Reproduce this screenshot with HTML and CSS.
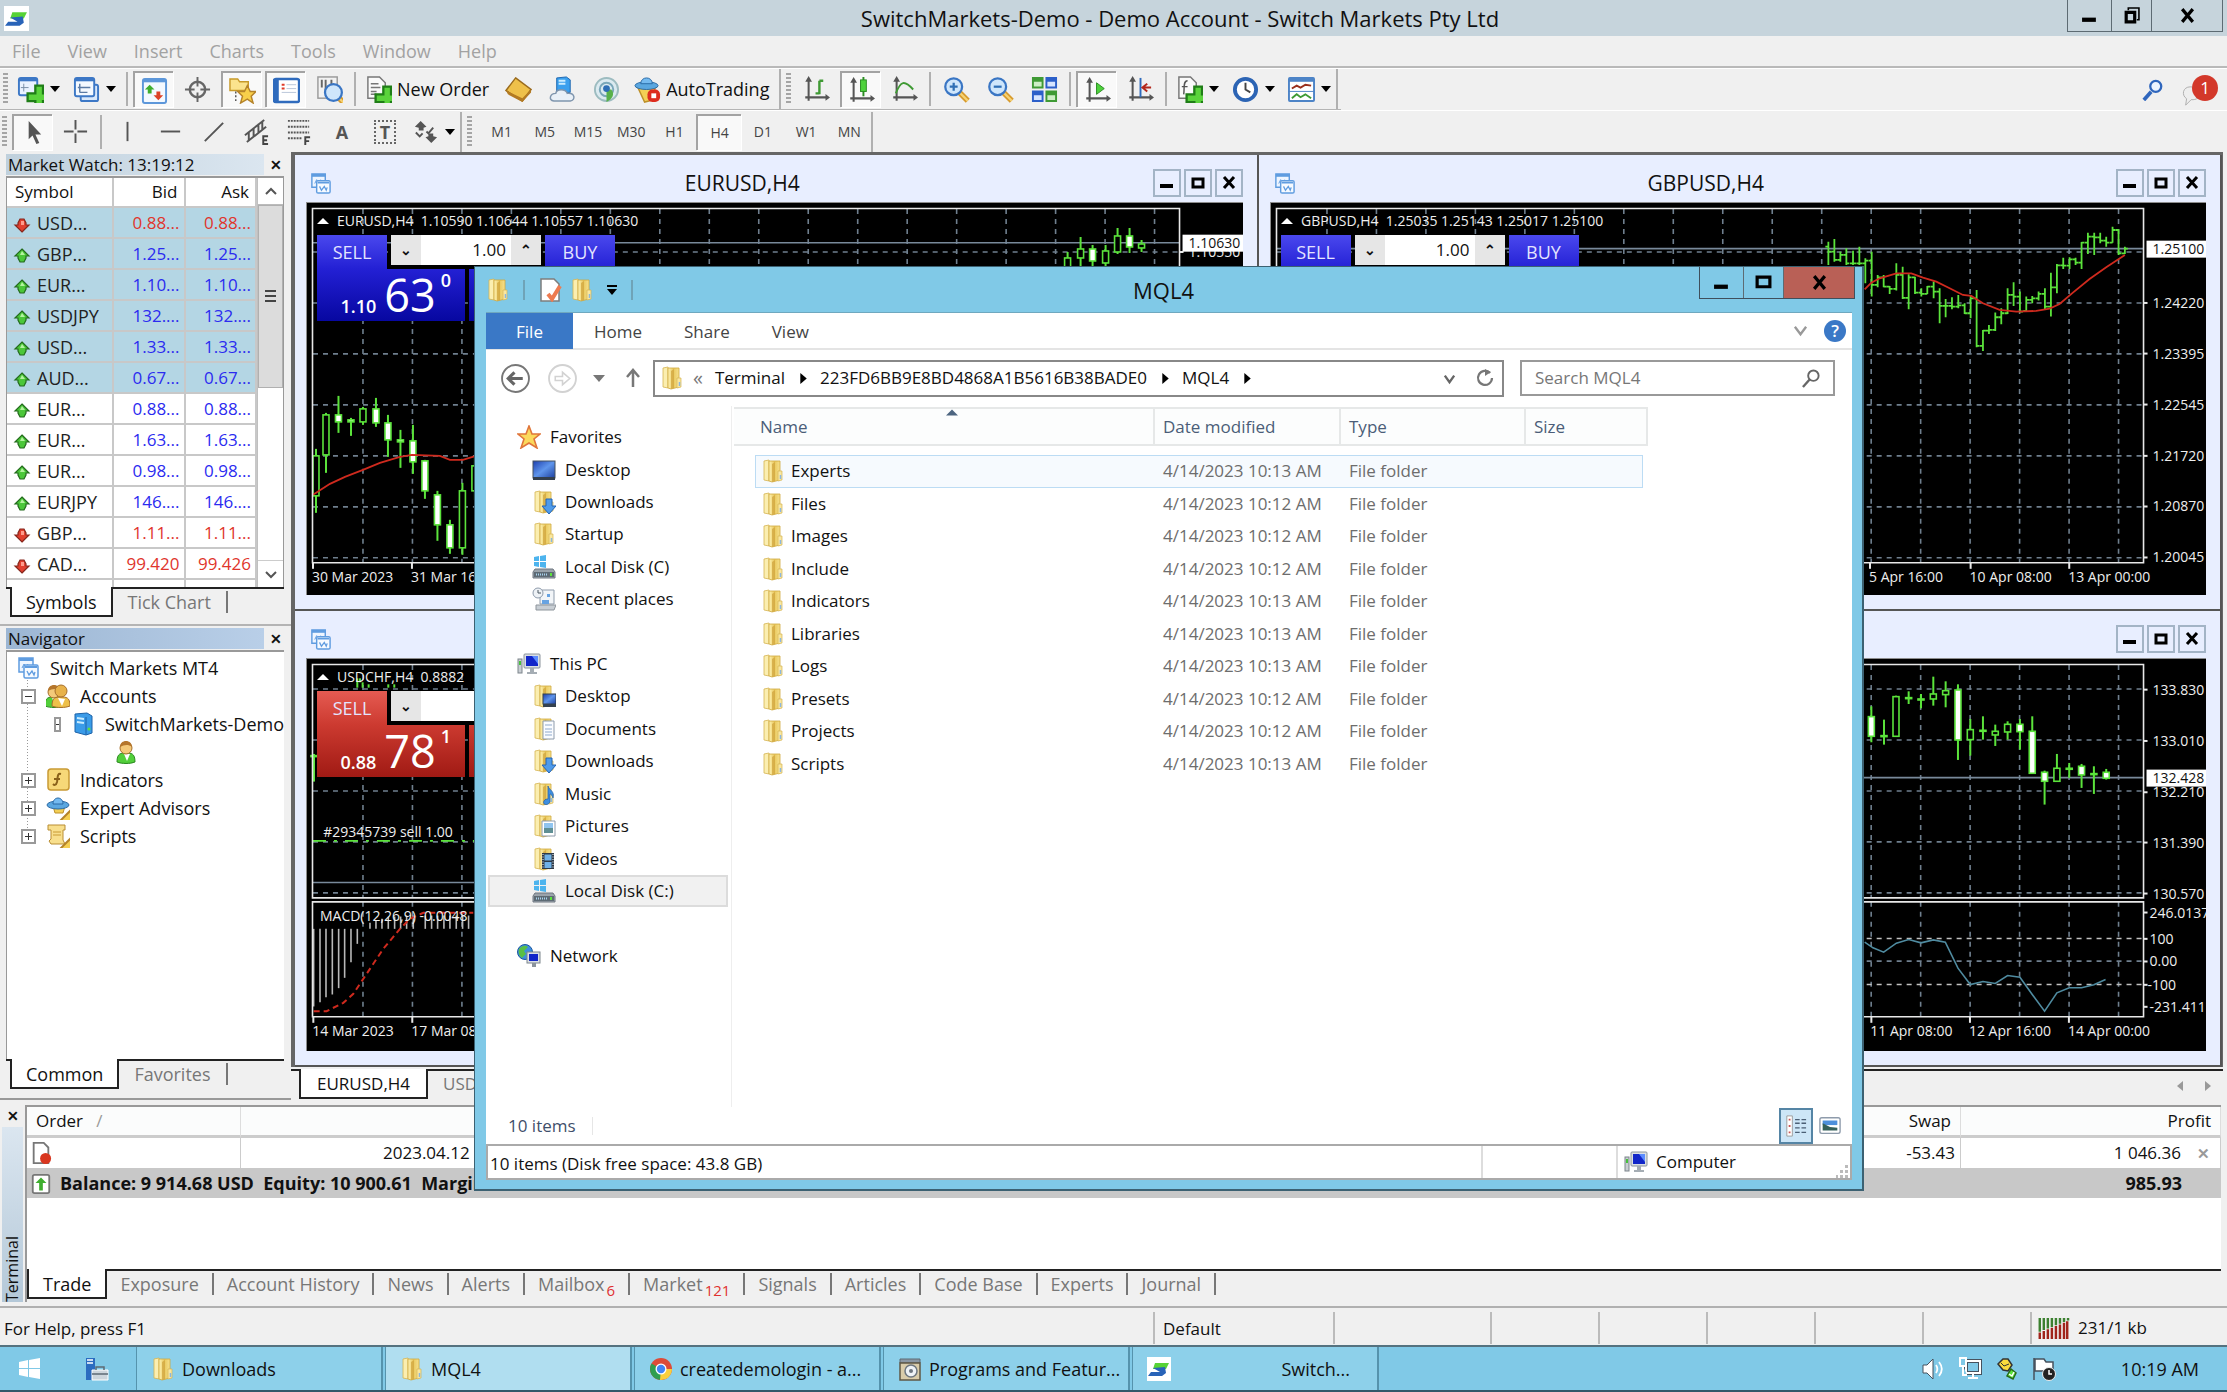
FILE: index.html
```html
<!DOCTYPE html>
<html lang="en">
<head>
<meta charset="utf-8">
<title>SwitchMarkets-Demo</title>
<link rel="stylesheet" href="styles.css">
</head>
<body>
<svg class="defs" aria-hidden="true">
  <defs>
    <linearGradient id="gold" x1="0" x2="1"><stop offset="0" stop-color="#fff3b4"/><stop offset=".5" stop-color="#e9c95f"/><stop offset="1" stop-color="#f6e08c"/></linearGradient>
    <linearGradient id="blue" x1="0" y1="0" x2="1" y2="1"><stop offset="0" stop-color="#1d3fae"/><stop offset=".5" stop-color="#5f95ec"/><stop offset="1" stop-color="#1c3f9e"/></linearGradient>
    <symbol id="folder" viewBox="0 0 24 24"><path d="M3 2l5-1v21l-5-1z" fill="#fbeeb0" stroke="#d6b452" stroke-width=".8"/><path d="M8 2h11v19l-8 2-3-1z" fill="url(#gold)" stroke="#cfa83e" stroke-width=".8"/><path d="M11 5l3-2v19l-3 1z" fill="#cfa23a" opacity=".7"/><path d="M17 12h4v9l-4 1z" fill="#f9e7a0" stroke="#d6b452" stroke-width=".7"/><path d="M19.500 16v4" stroke="#8db7dd" stroke-width="1.500"/></symbol>
    <symbol id="drive" viewBox="0 0 24 24"><path d="M2 2l5-1v5H2zM8 1l6-1v6H8zM2 7h5v5l-5-1zM8 7h6v6l-6-1z" fill="#4db4ee"/><path d="M3 14h18l2 3v6H1v-6z" fill="#9aa3ab" stroke="#6e7780"/><rect x="2" y="17" width="20" height="5" fill="#5d6a74"/><path d="M4 19.500h12" stroke="#a9d3ee" stroke-width="2" stroke-dasharray="1 1"/><rect x="18" y="18" width="2" height="3" fill="#5be33b"/></symbol>
    <symbol id="pc" viewBox="0 0 24 24"><rect x="1" y="7" width="4" height="14" fill="#c9ced3" stroke="#7d858c"/><path d="M3 9v4" stroke="#46c23b" stroke-width="2"/><rect x="7" y="2" width="16" height="14" rx="1" fill="#dadfe4" stroke="#8b949c"/><rect x="9" y="4" width="12" height="10" fill="#1226c9"/><path d="M15 4h6v8z" fill="#5b8cff"/><path d="M13 16h4v4h3v2h-10v-2h3z" fill="#a5adb4"/></symbol>
    <symbol id="network" viewBox="0 0 24 24"><circle cx="8" cy="8" r="7.500" fill="#3d8ee0" stroke="#1c579f"/><path d="M2 5c3-4 7-4 9-2l-4 4 2 3-4 4c-3-2-4-5-3-9z" fill="#59bf46"/><rect x="10" y="8" width="13" height="11" fill="#dadfe4" stroke="#7d858c"/><rect x="12" y="10" width="9" height="7" fill="#1226c9"/><path d="M15 19h4v4h-4z" fill="#8b949c"/></symbol>
    <symbol id="star" viewBox="0 0 24 24"><path d="M12 1l3 8h8l-6 5 3 9-8-5-8 5 3-9-6-5h8z" fill="#fbd95c" stroke="#e0763a" stroke-width="1.600"/></symbol>
    <symbol id="screen" viewBox="0 0 24 24"><rect x="1" y="3" width="22" height="17" fill="url(#blue)" stroke="#47525e"/><path d="M1 19h22v3H1z" fill="#333f4d"/></symbol>
    <symbol id="f-desk" viewBox="0 0 24 24"><use href="#folder"/><rect x="11" y="10" width="13" height="10" fill="url(#blue)" stroke="#35424f"/><path d="M11 20h13v3H11z" fill="#35424f"/></symbol>
    <symbol id="f-doc" viewBox="0 0 24 24"><use href="#folder"/><path d="M11 4h11v18H11z" fill="#fafcff" stroke="#8e9bab"/><path d="M13 8h7M13 12h7M13 15h7M13 18h7" stroke="#8fa9cc"/></symbol>
    <symbol id="f-down" viewBox="0 0 24 24"><use href="#folder"/><path d="M14 9h6v7h4l-7 8-7-8h4z" fill="#4f9bea" stroke="#2465b5"/></symbol>
    <symbol id="f-music" viewBox="0 0 24 24"><use href="#folder"/><path d="M16 4c1 4 7 5 5 12-1-3-2-4-3-4v8c-2 4-8 3-6-1 1-2 3-2 4-2z" fill="#3d8ee0" stroke="#1f5da8" stroke-width=".7"/></symbol>
    <symbol id="f-pic" viewBox="0 0 24 24"><use href="#folder"/><path d="M10 7h13v15H10z" fill="#fff" stroke="#8e9bab"/><path d="M12 9h9v5h-9z" fill="#8fc4ef"/><path d="M12 14h9v5h-9z" fill="#5f8f94"/></symbol>
    <symbol id="f-vid" viewBox="0 0 24 24"><use href="#folder"/><path d="M10 6h12v16H10z" fill="#2e3a48"/><path d="M12.500 7.500h7v6h-7zM12.500 15h7v6h-7z" fill="#6fb1e8"/><path d="M11 7v14M21 7v14" stroke="#fff" stroke-dasharray="1 1.500"/></symbol>
    <symbol id="recent" viewBox="0 0 24 24"><path d="M8 3h14v14H8z" fill="#f2f5f8" stroke="#8e9bab"/><path d="M4 18h20l-2 5H4z" fill="#c8ced4" stroke="#8e959c"/><circle cx="6" cy="6" r="5" fill="#eef2f6" stroke="#8e9bab"/><path d="M6 3v3h3" stroke="#4b5661" fill="none"/><path d="M10 13h7v4h-7zM15 7h3v3h-3z" fill="#67a3e2"/></symbol>
    <symbol id="mt" viewBox="0 0 24 24"><path d="M3 2h14v14H3z" fill="#eef5ff" stroke="#5f9ce0" stroke-width="1.500"/><path d="M3 3.500h14" stroke="#5f9ce0" stroke-width="3"/><path d="M6 12l2-4 2 3 2-3" stroke="#5f9ce0" fill="none"/><rect x="8" y="9" width="14" height="13" rx="1.500" fill="#f6faff" stroke="#5f9ce0" stroke-width="1.500"/><path d="M9 11h12" stroke="#5f9ce0" stroke-width="2"/><path d="M11 15l2 4 3-4 2 4 1-3" stroke="#5f9ce0" fill="none" stroke-width="1.300"/></symbol>
    <symbol id="up" viewBox="0 0 18 18"><path d="M9 2l7 7h-3v2l-2 4H7l-2-4V9H2z" fill="#4bc739" stroke="#236b1c" stroke-width="1.200"/><path d="M9 4l3 4H7z" fill="#b4f29f"/></symbol>
    <symbol id="down" viewBox="0 0 18 18"><path d="M9 16l7-7h-3V7l-2-4H7L5 7v2H2z" fill="#e2402f" stroke="#86271c" stroke-width="1.200"/><path d="M8 5h3v4H8z" fill="#ff9c8c"/></symbol>
    <symbol id="plus" viewBox="0 0 14 14"><path d="M5 1h4v4h4v4H9v4H5V9H1V5h4z" fill="#5ad33c" stroke="#1f7d17" stroke-width="1.200"/></symbol>
    <symbol id="lens" viewBox="0 0 24 24"><path d="M14 14l8 8" stroke="#d79a2b" stroke-width="5"/><path d="M14 14l8 8" stroke="#f6d273" stroke-width="2"/><circle cx="9.500" cy="9.500" r="7.500" fill="#cfe6fb" stroke="#3a76c4" stroke-width="2"/></symbol>
    <symbol id="switch" viewBox="0 0 24 24"><rect width="24" height="24" fill="#fff"/><path d="M8 6h14l-3 6H6z" fill="#57d336"/><path d="M6 11l12-1 1 6-4 3H1l3-4h9z" fill="#2863b8"/></symbol>
    <symbol id="win" viewBox="0 0 24 24"><path d="M2 5l9-2v8H2zM12 3l11-2v10H12zM2 12h9v8l-9-2zM12 12h11v10l-11-2z" fill="#fff"/></symbol>
    <symbol id="hat" viewBox="0 0 24 24"><path d="M7 10h12l-2 7H9z" fill="#f3cf55" stroke="#bd902a"/><ellipse cx="12" cy="9" rx="11" ry="4" fill="#5aa7e0" stroke="#2a6aa5"/><path d="M7 8c0-8 10-8 10 0z" fill="#74baf0" stroke="#2a6aa5"/></symbol>
    <symbol id="tag" viewBox="0 0 12 12"><path d="M6 1l5 5-5 5-5-5z" fill="#f5cf52" stroke="#b5832a"/></symbol>
    <symbol id="axes" viewBox="0 0 24 24"><path d="M5 22V3M2 19h20" stroke="#555" stroke-width="1.800" fill="none"/><path d="M5 0l3 5H2zM24 19l-4 3v-6z" fill="#555"/></symbol>
    <symbol id="person" viewBox="0 0 24 24"><path d="M3 22c0-9 4-9 9-9s9 0 9 9c-5 2-13 2-18 0z" fill="#52cf3a" stroke="#2c8a21"/><path d="M10 14l3 7 3-7z" fill="#fff"/><circle cx="12" cy="8" r="6" fill="#f4c979" stroke="#a66f2b"/><path d="M6 7c0-8 12-8 12 0-4-3-8-2-12 0z" fill="#b5762c"/></symbol>
  </defs>
</svg>

<header class="titlebar">
  <svg class="i25"><use href="#switch"/></svg>
  <h1>SwitchMarkets-Demo - Demo Account - Switch Markets Pty Ltd</h1>
  <div class="winbtns main-btns">
    <button aria-label="Minimize"><svg viewBox="0 0 16 16"><path d="M1 10h13v4H1z"/></svg></button>
    <button aria-label="Restore"><svg viewBox="0 0 16 16"><path d="M5 3V1h10v11h-2" fill="none" stroke="#000" stroke-width="1.500"/><path d="M3 5h8v9H3z" fill="none" stroke="#000" stroke-width="3"/></svg></button>
    <button class="wide" aria-label="Close"><svg viewBox="0 0 16 16"><path d="M3 2l10 12M13 2L3 14" stroke="#000" stroke-width="3"/></svg></button>
  </div>
</header>
<nav class="menu">
  <button>File</button><button>View</button><button>Insert</button><button>Charts</button><button>Tools</button><button>Window</button><button>Help</button>
</nav>

<div class="toolrow">
  <div class="toolbar">
    <i class="grip"></i>
    <button class="tb drop" aria-label="New chart"><svg viewBox="0 0 28 28"><rect x="2" y="2" width="19" height="18" rx="2" fill="#eaf3ff" stroke="#3d78c6" stroke-width="2"/><path d="M2 4h19" stroke="#3d78c6" stroke-width="3"/><path d="M7 8v8M4 12h8" stroke="#7a8fa8"/><svg x="9" y="8" width="20" height="20"><use href="#plus"/></svg></svg></button>
    <button class="tb drop" aria-label="Profiles"><svg viewBox="0 0 28 28"><rect x="8" y="9" width="18" height="17" rx="2" fill="#d8e8fb" stroke="#3d78c6" stroke-width="2"/><rect x="2" y="2" width="20" height="19" rx="2" fill="#f4f9ff" stroke="#3d78c6" stroke-width="2"/><path d="M2 4h20" stroke="#3d78c6" stroke-width="3"/><path d="M7 8v9M5 12h13M7 17h8" stroke="#5b7ba5" stroke-width="1.500"/></svg></button>
    <i class="sep"></i>
    <button class="tb on" aria-label="Market Watch"><svg viewBox="0 0 28 28"><rect x="2" y="2" width="24" height="25" rx="2" fill="#f4f9ff" stroke="#5d97da" stroke-width="2"/><path d="M2 4h24" stroke="#5d97da" stroke-width="3"/><path d="M9 8l5 5h-3v4H7v-4H4z" fill="#3fae2f"/><path d="M18 24l-5-5h3v-4h4v4h3z" fill="#dd4227"/></svg></button>
    <button class="tb" aria-label="Data Window"><svg viewBox="0 0 28 28"><circle cx="14" cy="14" r="8" fill="none" stroke="#666" stroke-width="2.500"/><path d="M14 1v10M14 17v10M1 14h10M17 14h10" stroke="#666" stroke-width="2"/></svg></button>
    <button class="tb on" aria-label="Navigator"><svg viewBox="0 0 28 28"><path d="M1 2h8l2 3h9v9H1z" fill="#fbe38d" stroke="#c79a2a" stroke-width="1.500"/><path d="M7 15v11" stroke="#555" stroke-dasharray="2 2" stroke-width="1.500"/><path d="M19 9l3 6h6l-5 5 2 7-6-4-7 4 2-7-5-5h7z" fill="#f8cf4a" stroke="#b5832a" stroke-width="1.500"/></svg></button>
    <button class="tb on" aria-label="Terminal"><svg viewBox="0 0 28 28"><rect x="1" y="2" width="26" height="24" rx="2" fill="#fff" stroke="#2f6bbd" stroke-width="2.500"/><path d="M2 3h4v22H2z" fill="#2f6bbd"/><path d="M9 8h3M9 12h3" stroke="#e03c2a" stroke-width="2"/><path d="M14 8h10M14 12h10M9 16h15" stroke="#b9c6d8"/></svg></button>
    <button class="tb" aria-label="Strategy Tester"><svg viewBox="0 0 28 28"><rect x="2" y="1" width="20" height="22" fill="#f2f2f2" stroke="#9a9a9a" stroke-width="1.500"/><path d="M6 4v8M10 4v12M16 4v6" stroke="#666" stroke-width="2"/><svg x="7" y="6" width="22" height="22"><use href="#lens"/></svg></svg></button>
    <i class="sep"></i>
    <button class="tb text"><svg viewBox="0 0 28 28"><path d="M3 1h12l6 6v16H3z" fill="#fafafa" stroke="#777" stroke-width="1.500"/><path d="M6 8h8M6 12h10M6 16h6M6 19h6" stroke="#777" stroke-width="1.500"/><svg x="9" y="9" width="19" height="19"><use href="#plus"/></svg></svg>New Order</button>
    <button class="tb" aria-label="MetaEditor"><svg viewBox="0 0 28 28"><path d="M11 2l16 12-9 12L1 15z" fill="#eec04a" stroke="#9a6a1c" stroke-width="1.500"/><path d="M1 15l2 4 15 8 9-10v-3l-9 9z" fill="#b37a22"/></svg></button>
    <button class="tb" aria-label="Virtual hosting"><svg viewBox="0 0 28 28"><path d="M8 2l10-1 4 3v13H8z" fill="#3aa0ee" stroke="#1c66b0"/><path d="M10 5h7M10 8h7" stroke="#c9ecff" stroke-width="2"/><path d="M5 26c-6-1-4-8 2-8 1-5 10-5 12 0 8-1 9 7 3 8z" fill="#e9f0f7" stroke="#7f95ad" stroke-width="1.500"/></svg></button>
    <button class="tb" aria-label="Signals"><svg viewBox="0 0 28 28"><circle cx="14" cy="14" r="12" fill="#dbeaf0" stroke="#9dbcc0" stroke-width="2"/><circle cx="14" cy="14" r="7" fill="none" stroke="#7aa7b9" stroke-width="2"/><path d="M14 14h5c4 5 1 10-5 13z" fill="#58b14b"/><circle cx="14" cy="13" r="3.500" fill="#2f6fb5"/></svg></button>
    <button class="tb text auto"><svg viewBox="0 0 28 28"><path d="M4 12h18l-3 13-8 2z" fill="#f3cf55" stroke="#bd902a" stroke-width="1.500"/><ellipse cx="13" cy="10" rx="12" ry="4" fill="#5aa7e0" stroke="#2a6aa5"/><path d="M7 8c0-8 12-8 12 0z" fill="#74baf0" stroke="#2a6aa5"/><rect x="14" y="14" width="13" height="13" rx="5" fill="#dd2c1e"/><rect x="18" y="18" width="5" height="5" fill="#fff"/></svg>AutoTrading</button>
    <i class="edge"></i>
    <i class="grip"></i>
    <button class="tb" aria-label="Bar chart"><svg viewBox="0 0 28 28"><svg width="26" height="28"><use href="#axes"/></svg><path d="M17 5v14M17 5h4M13 18h4" stroke="#3f9a34" stroke-width="2.500"/></svg></button>
    <button class="tb on" aria-label="Candlesticks"><svg viewBox="0 0 28 28"><svg width="26" height="28"><use href="#axes"/></svg><path d="M16 0v20" stroke="#2b8d22" stroke-width="2"/><rect x="13" y="3" width="6" height="12" fill="#4ed23c" stroke="#2b8d22"/></svg></button>
    <button class="tb" aria-label="Line chart"><svg viewBox="0 0 28 28"><svg width="26" height="28"><use href="#axes"/></svg><path d="M5 18c5-13 9-14 18-4" stroke="#3f9a34" stroke-width="2" fill="none"/></svg></button>
    <i class="sep"></i>
    <button class="tb" aria-label="Zoom in"><svg viewBox="0 0 24 24"><use href="#lens"/><path d="M6 9.500h7M9.500 6v7" stroke="#2f6fb5" stroke-width="2"/></svg></button>
    <button class="tb" aria-label="Zoom out"><svg viewBox="0 0 24 24"><use href="#lens"/><path d="M6 9.500h7" stroke="#2f6fb5" stroke-width="2"/></svg></button>
    <button class="tb" aria-label="Tile windows"><svg viewBox="0 0 28 28"><path d="M1 1h12v12H1zM15 15h12v12H15z" fill="#3f9a34"/><path d="M15 1h12v12H15zM1 15h12v12H1z" fill="#2c5fc9"/><path d="M3 6h8v5H3zM17 20h8v5h-8z" fill="#cdeec5"/><path d="M17 6h8v5h-8zM3 20h8v5H3z" fill="#d6e4ff"/></svg></button>
    <i class="sep"></i>
    <button class="tb on" aria-label="Auto scroll"><svg viewBox="0 0 28 28"><svg width="26" height="28"><use href="#axes"/></svg><path d="M13 6l8 6-8 6z" fill="#4ed23c" stroke="#2b8d22"/></svg></button>
    <button class="tb" aria-label="Chart shift"><svg viewBox="0 0 28 28"><svg width="26" height="28"><use href="#axes"/></svg><path d="M14 2v20" stroke="#2f6bbd" stroke-width="2"/><path d="M16 12h9M21 8l-5 4 5 4" stroke="#b3271b" stroke-width="2" fill="none"/></svg></button>
    <i class="sep"></i>
    <button class="tb drop" aria-label="Indicators"><svg viewBox="0 0 28 28"><path d="M3 1h12l6 6v16H3z" fill="#fafafa" stroke="#777" stroke-width="1.500"/><path d="M12 5c-5 0-3 8-4 14M6 11h6" stroke="#555" stroke-width="1.500" fill="none"/><svg x="9" y="9" width="19" height="19"><use href="#plus"/></svg></svg></button>
    <button class="tb drop" aria-label="Periods"><svg viewBox="0 0 28 28"><circle cx="14" cy="14" r="11" fill="#fff" stroke="#2c64b4" stroke-width="4"/><path d="M14 7v7l5 3" stroke="#444" stroke-width="2" fill="none"/></svg></button>
    <button class="tb drop" aria-label="Templates"><svg viewBox="0 0 28 28"><rect x="1" y="2" width="26" height="24" rx="1" fill="#fff" stroke="#4d84c7" stroke-width="2"/><path d="M1 4h26" stroke="#4d84c7" stroke-width="4"/><path d="M4 13l5-3 4 2 5-3 6 1" stroke="#99301d" stroke-width="2" fill="none"/><path d="M1 16h26" stroke="#4d84c7"/><path d="M4 23l5-4 4 3 5-3 6 4" stroke="#3f9a34" stroke-width="2" fill="none"/></svg></button>
    <i class="edge"></i>
  </div>
  <div class="tool-right">
    <button aria-label="Search"><svg viewBox="0 0 24 24"><path d="M10 14l-8 9" stroke="#2f66bd" stroke-width="4"/><circle cx="15" cy="8" r="6" fill="#eef5ff" stroke="#2f66bd" stroke-width="2.500"/></svg></button>
    <button class="notify" aria-label="Notifications"><svg viewBox="0 0 24 24"><path d="M9 2c14 0 14 15 1 14l-6 6 1-7C-1 11 1 2 9 2z" fill="#eee" stroke="#aaa"/></svg><b>1</b></button>
  </div>
</div>

<div class="toolrow second">
  <div class="toolbar">
    <i class="grip"></i>
    <button class="tb on" aria-label="Cursor"><svg viewBox="0 0 28 28"><path d="M9 2v19l4-4 4 9 3-1-4-9h6z" fill="#555"/></svg></button>
    <button class="tb" aria-label="Crosshair"><svg viewBox="0 0 28 28"><path d="M14 2v10M14 16v10M2 14h10M16 14h10" stroke="#555" stroke-width="2"/></svg></button>
    <i class="sep"></i>
    <button class="tb" aria-label="Vertical line"><svg viewBox="0 0 28 28"><path d="M14 4v20" stroke="#555" stroke-width="2"/></svg></button>
    <button class="tb" aria-label="Horizontal line"><svg viewBox="0 0 28 28"><path d="M4 14h20" stroke="#555" stroke-width="2"/></svg></button>
    <button class="tb" aria-label="Trend line"><svg viewBox="0 0 28 28"><path d="M5 24L24 5" stroke="#555" stroke-width="2"/></svg></button>
    <button class="tb" aria-label="Channel"><svg viewBox="0 0 28 28"><path d="M2 18L22 2M4 25L24 9M6 14v9M11 10v9M16 6v10M20 3v9" stroke="#555" stroke-width="2"/><path d="M26 19h-5v8h5M21 23h4" stroke="#444" stroke-width="2" fill="none"/></svg></button>
    <button class="tb" aria-label="Fibonacci"><svg viewBox="0 0 28 28"><path d="M2 3h22M2 9h22M2 15h22M2 21h14" stroke="#555" stroke-width="2" stroke-dasharray="2 1"/><path d="M25 20h-5v8M20 24h4" stroke="#444" stroke-width="2" fill="none"/></svg></button>
    <button class="tb glyph" aria-label="Text">A</button>
    <button class="tb glyph boxed" aria-label="Text label"><span>T</span></button>
    <button class="tb drop" aria-label="Arrows"><svg viewBox="0 0 28 28"><path d="M9 3l6 6-3 1v3H7v-3L3 9zM20 26l-6-6 3-1v-3h5v3l4 1z" fill="#555"/><path d="M15 14l2 2 5-6M4 15l4 4 3-3" stroke="#555" stroke-width="2" fill="none"/></svg></button>
    <i class="edge"></i>
    <i class="grip"></i>
    <div class="frames"><button>M1</button><button>M5</button><button>M15</button><button>M30</button><button>H1</button><button class="on">H4</button><button>D1</button><button>W1</button><button>MN</button></div>
    <i class="edge"></i>
  </div>
</div>

<main class="work">
  <aside class="docks">
    <section class="dock market">
      <header class="dock-title"><h2>Market Watch: 13:19:12</h2><button aria-label="Close">✕</button></header>
      <div class="quotes">
        <table>
          <thead><tr><th class="sym">Symbol</th><th>Bid</th><th>Ask</th></tr></thead>
          <tbody>
            <tr class="sel dn"><td><svg><use href="#down"/></svg>USD...</td><td>0.88...</td><td>0.88...</td></tr>
            <tr class="sel"><td><svg><use href="#up"/></svg>GBP...</td><td>1.25...</td><td>1.25...</td></tr>
            <tr class="sel"><td><svg><use href="#up"/></svg>EUR...</td><td>1.10...</td><td>1.10...</td></tr>
            <tr class="sel"><td><svg><use href="#up"/></svg>USDJPY</td><td>132....</td><td>132....</td></tr>
            <tr class="sel"><td><svg><use href="#up"/></svg>USD...</td><td>1.33...</td><td>1.33...</td></tr>
            <tr class="sel"><td><svg><use href="#up"/></svg>AUD...</td><td>0.67...</td><td>0.67...</td></tr>
            <tr><td><svg><use href="#up"/></svg>EUR...</td><td>0.88...</td><td>0.88...</td></tr>
            <tr><td><svg><use href="#up"/></svg>EUR...</td><td>1.63...</td><td>1.63...</td></tr>
            <tr><td><svg><use href="#up"/></svg>EUR...</td><td>0.98...</td><td>0.98...</td></tr>
            <tr><td><svg><use href="#up"/></svg>EURJPY</td><td>146....</td><td>146....</td></tr>
            <tr class="dn"><td><svg><use href="#down"/></svg>GBP...</td><td>1.11...</td><td>1.11...</td></tr>
            <tr class="dn"><td><svg><use href="#down"/></svg>CAD...</td><td>99.420</td><td>99.426</td></tr>
            <tr><td></td><td></td><td></td></tr>
          </tbody>
        </table>
        <div class="scroll">
          <button aria-label="Scroll up"><svg viewBox="0 0 12 12"><path d="M1 9l5-5 5 5" fill="none" stroke="#555" stroke-width="2"/></svg></button>
          <div class="thumb"><i></i></div>
          <button class="last" aria-label="Scroll down"><svg viewBox="0 0 12 12"><path d="M1 4l5 5 5-5" fill="none" stroke="#555" stroke-width="2"/></svg></button>
        </div>
      </div>
      <div class="tabs"><button class="on">Symbols</button><button>Tick Chart</button></div>
    </section>
    <section class="dock nav">
      <header class="dock-title active"><h2>Navigator</h2><button aria-label="Close">✕</button></header>
      <ul class="tree">
        <li><svg><use href="#mt"/></svg>Switch Markets MT4</li>
        <li class="l1"><i class="box minus"></i><svg viewBox="0 0 24 24"><svg x="-4" width="20" height="22"><use href="#person"/></svg><path d="M6 22c0-9 4-9 9-9s9 0 9 9c-5 2-13 2-18 0z" fill="#eec04a" stroke="#a66f2b"/><circle cx="15" cy="7" r="6" fill="#e8b24a" stroke="#a66f2b"/><path d="M12 14l4 8 3-7z" fill="#fff"/></svg>Accounts</li>
        <li class="l2"><i class="box minus"></i><svg viewBox="0 0 24 24"><path d="M4 2l12-1 5 3v17l-6 2L4 20z" fill="#3a9be8" stroke="#1d62a8"/><path d="M15 5v18" stroke="#1d62a8"/><path d="M6 6l7 1M6 10l7 1" stroke="#c9ecff" stroke-width="2"/><circle cx="18" cy="17" r="1.500" fill="#5be33b"/></svg>SwitchMarkets-Demo</li>
        <li class="l3"><svg><use href="#person"/></svg></li>
        <li class="l1"><i class="box"></i><svg viewBox="0 0 24 24"><rect x="2" y="1" width="21" height="21" rx="3" fill="#f7d878" stroke="#c99a35" stroke-width="1.500"/><path d="M15 6c-4-1-3 3-4 8-1 4-3 3-4 2M8 11h6" stroke="#8a611a" stroke-width="2" fill="none"/></svg>Indicators</li>
        <li class="l1"><i class="box"></i><svg viewBox="0 0 24 24"><use href="#hat"/><svg x="13" y="12" width="12" height="12"><use href="#tag"/></svg></svg>Expert Advisors</li>
        <li class="l1"><i class="box"></i><svg viewBox="0 0 24 24"><path d="M2 1h17v5h-2v10l2 4H5l-2-3 2-2V6H2z" fill="#f8df8d" stroke="#b98d33"/><path d="M7 8h8M7 11h8" stroke="#c99a35"/><svg x="13" y="12" width="12" height="12"><use href="#tag"/></svg></svg>Scripts</li>
      </ul>
      <div class="tabs"><button class="on">Common</button><button>Favorites</button></div>
    </section>
  </aside>

  <section class="mdi">
    <div class="windows">
      <article class="chart-win">
        <header><svg><use href="#mt"/></svg><h3>EURUSD,H4</h3><div class="mini"></div></header>
        <div class="plot" data-chart="eurusd">
          <div class="oneclick">
            <button class="side">SELL</button><div class="vol"><button aria-label="Less">⌄</button><input value="1.00" aria-label="Volume"><button aria-label="More">⌃</button></div><button class="side">BUY</button>
            <div class="price"><small>1.10</small><big>63</big><sup>0</sup></div><div class="price buy"></div>
          </div>
        </div>
      </article>
      <article class="chart-win">
        <header><svg><use href="#mt"/></svg><h3>GBPUSD,H4</h3><div class="mini"></div></header>
        <div class="plot" data-chart="gbpusd">
          <div class="oneclick">
            <button class="side">SELL</button><div class="vol"><button aria-label="Less">⌄</button><input value="1.00" aria-label="Volume"><button aria-label="More">⌃</button></div><button class="side">BUY</button>
            <div class="price"></div><div class="price buy"></div>
          </div>
        </div>
      </article>
      <article class="chart-win">
        <header><svg><use href="#mt"/></svg><h3></h3><div class="mini"></div></header>
        <div class="plot" data-chart="usdchf">
          <div class="oneclick red">
            <button class="side">SELL</button><div class="vol"><button aria-label="Less">⌄</button><input value="" aria-label="Volume"><button aria-label="More">⌃</button></div><button class="side" aria-label="Buy"></button>
            <div class="price"><small>0.88</small><big>78</big><sup>1</sup></div><div class="price buy"></div>
          </div>
        </div>
      </article>
      <article class="chart-win">
        <header><svg><use href="#mt"/></svg><h3></h3><div class="mini"></div></header>
        <div class="plot" data-chart="usdjpy"></div>
      </article>
    </div>
    <div class="mdi-tabs"><div class="tabs"><button class="on">EURUSD,H4</button><button class="cut">USD</button></div><div class="arrows"><svg viewBox="0 0 6 10"><path d="M6 0v10L0 5z"/></svg><svg viewBox="0 0 6 10"><path d="M0 0v10l6-5z"/></svg></div></div>
  </section>
</main>

<section class="terminal">
  <div class="strip"><button aria-label="Close">✕</button><span>Terminal</span></div>
  <div class="term-body">
    <table>
      <colgroup><col class="c-order"><col><col class="c-swap"><col class="c-profit"></colgroup>
      <thead><tr><th class="l">Order &nbsp; <em>/</em></th><th></th><th>Swap</th><th class="p">Profit</th></tr></thead>
      <tbody>
        <tr><td class="l"><svg viewBox="0 0 24 24"><path d="M4 1h11l5 5v17H4z" fill="#fff" stroke="#777" stroke-width="2"/><circle cx="17" cy="18" r="6" fill="#d8361f"/></svg></td><td class="time">2023.04.12</td><td>-53.43</td><td>1 046.36<i>✕</i></td></tr>
        <tr class="total"><td colspan="3" class="l"><svg viewBox="0 0 24 24"><rect x="3" y="2" width="18" height="20" rx="2" fill="#fff" stroke="#777" stroke-width="2"/><path d="M12 5l6 6h-4v8h-4v-8H6z" fill="#3fae2f"/></svg>Balance: 9 914.68 USD&nbsp; Equity: 10 900.61&nbsp; Margin</td><td>985.93<i></i></td></tr>
      </tbody>
    </table>
    <div class="tabs"><button class="on">Trade</button><button>Exposure</button><button>Account History</button><button>News</button><button>Alerts</button><button>Mailbox<sub>6</sub></button><button>Market<sub>121</sub></button><button>Signals</button><button>Articles</button><button>Code Base</button><button>Experts</button><button>Journal</button></div>
  </div>
</section>

<footer class="status">
  <span class="help">For Help, press F1</span><span class="s-def">Default</span><span class="s-a"></span><span class="s-b"></span><span class="s-b"></span><span class="s-b"></span><span class="s-b"></span><span class="s-b"></span>
  <span class="net"><svg viewBox="0 0 38 26"><path d="M2 0v17M7 0v15M12 0v13M17 0v11M22 0v9M27 0v7M32 0v5M37 0v3" stroke="#3c8030" stroke-width="3"/><path d="M2 18v8M7 16v10M12 14v12M17 12v14M22 10v16M27 8v18M32 6v20M36 4v22" stroke="#a0241b" stroke-width="3"/></svg>231/1 kb</span>
</footer>

<nav class="taskbar">
  <button class="ico" aria-label="Start"><svg><use href="#win"/></svg></button>
  <button class="ico" aria-label="Server Manager"><svg viewBox="0 0 24 24"><path d="M1 1h9v22H1z" fill="#2b6cc0"/><path d="M2 3h6M2 6h6" stroke="#fff" stroke-width="1.500"/><path d="M7 13h16v10H7z" fill="#cdd5dc" stroke="#fff"/><path d="M11 13v-3h8v3M7 17h16" stroke="#5d6a74" stroke-width="1.500" fill="none"/></svg></button>
  <button class="task"><svg><use href="#folder"/></svg>Downloads</button>
  <button class="task on"><svg><use href="#folder"/></svg>MQL4</button>
  <button class="task"><svg viewBox="0 0 24 24"><circle cx="12" cy="12" r="11" fill="#dd4b39"/><path d="M12 12L2.500 6.500A11 11 0 0 0 12 23z" fill="#2f9e4f"/><path d="M12 12h11A11 11 0 0 1 11 23z" fill="#f9cf3c"/><circle cx="12" cy="12" r="5.500" fill="#fff"/><circle cx="12" cy="12" r="4.200" fill="#4285f4"/></svg>createdemologin - a...</button>
  <button class="task"><svg viewBox="0 0 24 24"><path d="M2 2h20v4H2z" fill="#8a97a4" stroke="#5d6a74"/><path d="M2 6h20v17H2z" fill="#d9ccaa" stroke="#5f5746" stroke-width="1.500"/><circle cx="13" cy="14" r="6" fill="#eef2f6" stroke="#6e7780" stroke-width="1.500"/><circle cx="13" cy="14" r="2" fill="#6e7780"/></svg>Programs and Featur...</button>
  <button class="task far"><svg><use href="#switch"/></svg><span>Switch...</span></button>
  <div class="tray">
    <svg viewBox="0 0 24 24"><path d="M2 8h4l6-6v20l-6-6H2z" fill="#fff" stroke="#47525e"/><path d="M15 8c2 3 2 5 0 8M18 5c4 5 4 9 0 14" stroke="#fff" stroke-width="1.800" fill="none"/></svg>
    <svg viewBox="0 0 24 24"><path d="M8 4h14v12H8z" fill="none" stroke="#47525e" stroke-width="4"/><path d="M8 4h14v12H8zM15 16v5M10 21h10" fill="none" stroke="#fff" stroke-width="2"/><path d="M2 1h6v8H2zM5 9v9h4" fill="#80c9e7" stroke="#fff" stroke-width="2"/></svg>
    <svg viewBox="0 0 24 24"><path d="M8 2h5l4 6-4 6-5-1-5-6z" fill="#fbdc3c" stroke="#333" stroke-width="1.500"/><path d="M6 6l3 3 5-2" stroke="#333" fill="none"/><path d="M16 12l5 4-3 6-6-3z" fill="#5be33b" stroke="#256b18" stroke-width="1.500"/><path d="M14 17l3 2 2-4" stroke="#fff" fill="none" stroke-width="1.500"/></svg>
    <svg viewBox="0 0 24 24"><path d="M2 1v22M3 2h9l2 3h7v9H3z" fill="#fff" stroke="#47525e" stroke-width="1.500"/><circle cx="17" cy="17" r="6.500" fill="#222" stroke="#eee"/><path d="M17 13v4h3" stroke="#fff" fill="none" stroke-width="1.500"/></svg>
    <time>10:19 AM</time>
  </div>
</nav>

<section class="explorer">
  <header class="ex-title">
    <div class="quick"><svg><use href="#folder"/></svg><i></i><svg viewBox="0 0 24 24"><path d="M3 1h13l5 5v17H3z" fill="#fff" stroke="#7d7d7d" stroke-width="1.500"/><path d="M10 16l4 5 8-13" stroke="#ee7b50" stroke-width="4" fill="none"/></svg><svg><use href="#folder"/></svg><svg class="caret" viewBox="0 0 12 12"><path d="M1 2h10" stroke="#000" stroke-width="2"/><path d="M1 5h10L6 11z"/></svg><i></i></div>
    <h2>MQL4</h2>
    <div class="winbtns">
      <button aria-label="Minimize"><svg viewBox="0 0 16 16"><path d="M1 10h13v4H1z"/></svg></button>
      <button aria-label="Maximize"><svg viewBox="0 0 16 16"><path d="M2 3h12v9H2z" fill="none" stroke="#000" stroke-width="3"/></svg></button>
      <button class="wide close" aria-label="Close"><svg viewBox="0 0 16 16"><path d="M3 2l10 12M13 2L3 14" stroke="#000" stroke-width="3"/></svg></button>
    </div>
  </header>
  <div class="ex-body">
    <div class="ribbon"><button class="file">File</button><button>Home</button><button>Share</button><button>View</button><svg class="chev" viewBox="0 0 16 16"><path d="M2 4l6 8 6-8" fill="none" stroke="#999" stroke-width="2.500"/></svg><button class="q" aria-label="Help">?</button></div>
    <div class="address">
      <button class="round" aria-label="Back"><svg viewBox="0 0 28 28"><circle cx="14" cy="14" r="13" fill="none" stroke="#777" stroke-width="1.800"/><path d="M7 14h14M13 8l-6 6 6 6" fill="none" stroke="#666" stroke-width="3"/></svg></button>
      <button class="round" aria-label="Forward"><svg viewBox="0 0 28 28"><circle cx="14" cy="14" r="13" fill="none" stroke="#d2d2d2" stroke-width="1.800"/><path d="M7 12h7V8l7 6-7 6v-4H7z" fill="none" stroke="#d2d2d2" stroke-width="1.500"/></svg></button>
      <svg class="s12" viewBox="0 0 12 12"><path d="M0 3h12l-6 7z" fill="#777"/></svg>
      <button class="go-up" aria-label="Up"><svg viewBox="0 0 20 20"><path d="M10 19V3M4 9l6-7 6 7" fill="none" stroke="#777" stroke-width="2.500"/></svg></button>
      <div class="path"><svg class="pf"><use href="#folder"/></svg><span class="dim">«</span><a href="#">Terminal</a><svg class="tri" viewBox="0 0 8 12"><path d="M0 0v12l7-6z"/></svg><a href="#">223FD6BB9E8BD4868A1B5616B38BADE0</a><svg class="tri" viewBox="0 0 8 12"><path d="M0 0v12l7-6z"/></svg><a href="#">MQL4</a><svg class="tri" viewBox="0 0 8 12"><path d="M0 0v12l7-6z"/></svg><svg class="chev end" viewBox="0 0 16 16"><path d="M3 5l5 7 5-7" fill="none" stroke="#666" stroke-width="2.500"/></svg><svg class="reload" viewBox="0 0 20 20"><path d="M15 5a7 7 0 1 0 2 5" fill="none" stroke="#777" stroke-width="2.200"/><path d="M10 1v7l6-4z" fill="#777"/></svg></div>
      <label class="search"><input placeholder="Search MQL4" aria-label="Search MQL4"><svg viewBox="0 0 20 20"><circle cx="12" cy="7" r="5.500" fill="none" stroke="#666" stroke-width="2"/><path d="M8 11l-7 8" stroke="#666" stroke-width="2.500"/></svg></label>
    </div>
    <div class="ex-main">
      <nav class="places">
        <a href="#" class="root"><svg><use href="#star"/></svg>Favorites</a>
        <a href="#"><svg><use href="#screen"/></svg>Desktop</a>
        <a href="#"><svg><use href="#f-down"/></svg>Downloads</a>
        <a href="#"><svg><use href="#folder"/></svg>Startup</a>
        <a href="#"><svg><use href="#drive"/></svg>Local Disk (C)</a>
        <a href="#"><svg><use href="#recent"/></svg>Recent places</a>
        <i></i>
        <a href="#" class="root"><svg><use href="#pc"/></svg>This PC</a>
        <a href="#"><svg><use href="#f-desk"/></svg>Desktop</a>
        <a href="#"><svg><use href="#f-doc"/></svg>Documents</a>
        <a href="#"><svg><use href="#f-down"/></svg>Downloads</a>
        <a href="#"><svg><use href="#f-music"/></svg>Music</a>
        <a href="#"><svg><use href="#f-pic"/></svg>Pictures</a>
        <a href="#"><svg><use href="#f-vid"/></svg>Videos</a>
        <a href="#" class="cur"><svg><use href="#drive"/></svg>Local Disk (C:)</a>
        <i></i>
        <a href="#" class="root"><svg><use href="#network"/></svg>Network</a>
      </nav>
      <div class="files">
        <div class="cols"><span class="n">Name<svg viewBox="0 0 12 6"><path d="M6 0l6 6H0z" fill="#4d6580"/></svg></span><span class="d">Date modified</span><span class="t">Type</span><span class="s">Size</span></div>
        <table>
          <colgroup><col class="f-name"><col class="f-date"><col></colgroup>
          <tbody>
            <tr class="hot"><td><svg><use href="#folder"/></svg>Experts</td><td>4/14/2023 10:13 AM</td><td>File folder</td></tr>
            <tr><td><svg><use href="#folder"/></svg>Files</td><td>4/14/2023 10:12 AM</td><td>File folder</td></tr>
            <tr><td><svg><use href="#folder"/></svg>Images</td><td>4/14/2023 10:12 AM</td><td>File folder</td></tr>
            <tr><td><svg><use href="#folder"/></svg>Include</td><td>4/14/2023 10:12 AM</td><td>File folder</td></tr>
            <tr><td><svg><use href="#folder"/></svg>Indicators</td><td>4/14/2023 10:13 AM</td><td>File folder</td></tr>
            <tr><td><svg><use href="#folder"/></svg>Libraries</td><td>4/14/2023 10:13 AM</td><td>File folder</td></tr>
            <tr><td><svg><use href="#folder"/></svg>Logs</td><td>4/14/2023 10:13 AM</td><td>File folder</td></tr>
            <tr><td><svg><use href="#folder"/></svg>Presets</td><td>4/14/2023 10:12 AM</td><td>File folder</td></tr>
            <tr><td><svg><use href="#folder"/></svg>Projects</td><td>4/14/2023 10:12 AM</td><td>File folder</td></tr>
            <tr><td><svg><use href="#folder"/></svg>Scripts</td><td>4/14/2023 10:13 AM</td><td>File folder</td></tr>
          </tbody>
        </table>
      </div>
    </div>
    <div class="ex-count"><span>10 items</span>
      <button class="view on" aria-label="Details view"><svg viewBox="0 0 24 24"><path d="M2 1h6v22H2z" fill="#fff" stroke="#999"/><path d="M4 5h2M4 12h2M4 19h2" stroke="#c55" stroke-width="2"/><path d="M11 5h5M18 5h5M11 9h5M18 9h5M11 14h5M18 14h5M11 19h5M18 19h5" stroke="#4b5f75" stroke-width="1.500"/></svg></button>
      <button class="view" aria-label="Large icons"><svg viewBox="0 0 24 24"><rect x="1" y="3" width="22" height="17" rx="2" fill="#fff" stroke="#8e9bab" stroke-width="1.500"/><path d="M4 6h16v5H4z" fill="#4d8fdb"/><path d="M4 9l8 4 8 1v3H4z" fill="#35605a"/></svg></button>
    </div>
    <div class="ex-status"><span class="g">10 items (Disk free space: 43.8 GB)</span><span class="m"></span><span class="c"><svg><use href="#pc"/></svg>Computer<svg class="size" viewBox="0 0 14 14"><path d="M9 1h3v3H9zM9 6h3v3H9zM4 6h3v3H4zM9 11h3v3H9zM4 11h3v3H4zM-1 11h3v3h-3z" fill="#bbb"/></svg></span></div>
  </div>
</section>
<script src="charts.js"></script>
</body>
</html>
```
FILE: styles.css
```css
* { box-sizing: border-box; }
html, body { height: 100%; margin: 0; }
body {
  display: flex; flex-direction: column; overflow: hidden; position: relative;
  background: #f0f0f0; color: #111;
  font: 17px/24px "Open Sans", "Noto Sans", sans-serif;
}
button, input { font: inherit; color: inherit; padding: 0; margin: 0; border: 0; background: none; border-radius: 0; }
a { color: inherit; text-decoration: none; }
h1, h2, h3, ul { margin: 0; padding: 0; font-weight: 400; }
table { border-collapse: collapse; }
th { font-weight: 400; }
svg { width: 24px; height: 24px; flex: none; display: block; }
i, em { font-style: normal; }
.defs { position: absolute; width: 0; height: 0; }

/* title bar */
.titlebar { flex: none; height: 36px; display: flex; align-items: center; background: #c6d4dc; padding: 0 4px; }
.titlebar h1 { flex: 1; font-size: 22px; text-align: center; padding-left: 264px; }
.i25 { width: 25px; height: 25px; }
.winbtns { display: flex; align-self: flex-start; border: 1px solid #5d6b73; border-top: 0; }
.winbtns button { width: 43px; height: 31px; display: grid; place-items: center; }
.winbtns button + button { border-left: 1px solid #5d6b73; width: 40px; }
.winbtns .wide.wide { width: 71px; }
.winbtns svg { width: 17px; height: 17px; }
.winbtns .close { background: #b96056; }

.menu { flex: none; height: 32px; display: flex; gap: 27px; padding: 0 12px; border-bottom: 2px solid #b9b9b9; color: #a2a2a2; font-size: 18px; }

/* toolbars */
.toolrow { flex: none; height: 42px; display: flex; justify-content: space-between; border-top: 1px solid #fff; }
.toolbar { display: flex; align-items: center; border-bottom: 1px solid #b4b4b4; padding-left: 1px; }
.second .toolbar { border-bottom: 0; padding-left: 0; }
.grip { width: 5px; height: 32px; margin: 0 5px 0 2px; background: repeating-linear-gradient(#a5a5a5 0 2px, #f0f0f0 2px 4px); }
.sep { width: 2px; height: 34px; margin: 0 5px; background: #b0b0b0; }
.edge { width: 2px; height: 40px; background: #b0b0b0; margin-right: 3px; }
.tb { width: 40px; height: 36px; margin-right: 4px; display: flex; align-items: center; justify-content: center; }
.second .tb { margin-right: 3px; }
.tb svg { width: 27px; height: 27px; }
.tb svg svg { width: auto; height: auto; }
.toolbar .tb:has(+ .sep), .toolbar .tb:has(+ .edge) { margin-right: 0; }
.tb.on, .frames .on { background: #f9f9f9; border: solid #a3a3a3; border-width: 2px 0 0 2px; box-shadow: 1px 1px 0 #fff; }
.tb.drop { width: 52px; justify-content: flex-start; padding-left: 4px; }
.tb.drop::after { content: ""; border: 5px solid transparent; border-top: 6px solid #000; border-bottom: 0; margin-left: 6px; }
.tb.text { width: auto; gap: 5px; padding: 0 5px 0 4px; font-size: 18px; }
.tb.auto { padding-right: 10px; }
.glyph { color: #555; font-weight: 700; font-size: 18px; }
.boxed span { border: 2px dotted #666; line-height: 20px; padding: 0 4px; }
.frames { display: flex; width: 391px; height: 36px; margin-left: 3px; }
.frames button { flex: 1; font-size: 14px; color: #444; }
.tool-right { display: flex; align-items: center; gap: 18px; padding-right: 9px; }
.tool-right svg { width: 22px; height: 22px; }
.notify { position: relative; width: 36px; height: 34px; display: flex; align-items: flex-end; }
.notify b { position: absolute; right: 0; top: 2px; width: 26px; height: 26px; border-radius: 50%; background: #d3382a; color: #fff; font-weight: 400; line-height: 26px; }

/* work area */
.work { flex: 1; min-height: 0; display: flex; }
.docks { flex: none; width: 291px; display: flex; flex-direction: column; }
.dock { padding: 2px 7px 0 6px; display: flex; flex-direction: column; }
.market { flex: none; height: 474px; border-bottom: 2px solid #b4b4b4; }
.nav { flex: 1; min-height: 0; border-bottom: 2px solid #999; padding-bottom: 2px; }
.dock-title { display: flex; align-items: center; justify-content: space-between; height: 21px; margin-bottom: 1px; }
.dock-title h2 { font-size: 17px; line-height: 21px; width: 258px; background: linear-gradient(90deg, #bfd0dc, #dbe6f0); padding-left: 2px; }
.dock-title.active h2 { background: linear-gradient(90deg, #9cb6d3, #b9cfe8); }
.dock-title button, .strip button { font-size: 14px; font-weight: 700; line-height: 20px; width: 16px; }
.quotes { flex: 1; min-height: 0; overflow: hidden; display: flex; align-items: flex-start; background: #fff; border: solid #999; border-width: 2px 1px 0 1px; }
.quotes table { flex: 1; table-layout: fixed; border-collapse: separate; border-spacing: 0; }
.quotes th, .quotes td { height: 31px; padding: 0 4px 0 0; text-align: right; border: solid #c8c8c8; border-width: 0 2px 2px 0; line-height: 24px; color: #2b2bf0; }
.quotes th { height: 30px; color: #111; padding-right: 6px; }
.quotes th.sym { width: 107px; text-align: left; padding-left: 8px; }
.quotes .sel td { background: #b4d6e4; }
.quotes .dn td { color: #e0352c; }
.quotes tr td:first-child { text-align: left; color: #222; white-space: nowrap; font-size: 18px; }
.quotes td svg { width: 18px; height: 18px; display: inline-block; vertical-align: -4px; margin: 0 6px 0 6px; }
.scroll { width: 26px; align-self: stretch; display: flex; flex-direction: column; border-left: 1px solid #c0c0c0; }
.scroll button { height: 27px; display: grid; place-items: center; border-bottom: 1px solid #bbb; }
.scroll .last { margin-top: auto; border: 0; border-top: 1px solid #ccc; }
.scroll svg { width: 12px; height: 12px; }
.thumb { height: 183px; background: #dcdcdc; border: 1px solid #b0b0b0; display: grid; place-items: center; }
.thumb i { width: 11px; height: 13px; background: repeating-linear-gradient(#444 0 2px, #dcdcdc 2px 5px); }

.tabs { flex: none; height: 37px; display: flex; align-items: flex-start; border-top: 2px solid #222; font-size: 18px; color: #777; }
.tabs button { height: 22px; line-height: 22px; margin-top: 2px; padding: 0 15px; border-right: 2px solid #777; white-space: nowrap; }
.tabs .on { height: 30px; margin: -2px 0 0 4px; background: #fff; color: #111; border: solid #222; border-width: 0 2px 2px 2px; padding: 2px 14px 0; }

.tree {
  flex: 1; list-style: none; border: solid #999; border-width: 2px 0 0 1px; padding: 2px 0 0 9px; overflow: hidden;
  background: #fff repeating-linear-gradient(#999 0 1px, #fff 1px 3px) 20px 28px / 1px 156px no-repeat;
}
.tree li { height: 28px; display: flex; align-items: center; gap: 10px; white-space: nowrap; font-size: 18px; }
.tree .l1 { padding-left: 5px; }
.tree .l2 { padding-left: 38px; }
.tree .l3 { padding-left: 98px; }
.box { width: 15px; height: 15px; border: 2px solid #999; background: linear-gradient(#333, #333) center / 7px 1px no-repeat, linear-gradient(#333, #333) center / 1px 7px no-repeat, #fff; }
.box.minus { background: linear-gradient(#333, #333) center / 7px 1px no-repeat, #fff; }
.box + svg { box-shadow: none; }

/* chart windows */
.mdi { flex: 1; min-width: 0; display: flex; flex-direction: column; padding-right: 4px; }
.windows { flex: 1; min-height: 0; display: grid; grid-template: 1fr 1fr / 1fr 1fr; border: 3px solid #666; border-width: 3px 1px 0 4px; }
.chart-win { min-width: 0; min-height: 0; display: flex; flex-direction: column; background: #e8eeff; padding: 0 14px 14px 11px; border: solid #555; border-width: 0 2px 2px 0; }
.chart-win header { flex: none; height: 47px; display: flex; align-items: center; padding: 9px 0 0 3px; }
.chart-win header > svg { width: 23px; height: 23px; }
.chart-win h3 { flex: 1; font-size: 21px; text-align: center; }
.mini { display: flex; gap: 3px; }
.mini button { width: 28px; height: 28px; border: 2px solid #a3b4c6; display: grid; place-items: center; }
.mini svg { width: 16px; height: 16px; }
.plot { flex: 1; min-height: 0; position: relative; background: #000; border: solid #8c8c8c; border-width: 1px 0 0 1px; overflow: hidden; }
.plot > svg { width: 100%; height: 100%; }
.plot text { fill: #eee; font-size: 14px; font-weight: 500; white-space: pre; }
.plot .tag { fill: #111; }

.oneclick { --hi: #4a48ee; --mid: #2320d4; --lo: #0707a0; position: absolute; left: 10px; top: 32px; display: grid; grid-template-columns: 148px 146px; grid-template-rows: 34px 52px; column-gap: 4px; color: #fff; }
.oneclick.red { --hi: #e55b52; --mid: #cc3a30; --lo: #a01a14; }
.oneclick .side { width: 70px; background: linear-gradient(var(--hi), var(--mid)); color: #e4e4ff; grid-row: 1; grid-column: 1; font-size: 18px; line-height: 30px; }
.oneclick .vol + .side { grid-column: 2; justify-self: end; }
.vol { grid-row: 1; grid-column: 1 / 3; justify-self: center; display: flex; width: 150px; height: 30px; background: #fff; color: #111; }
.vol button { width: 30px; background: #e6e6e6; font-size: 14px; font-weight: 700; }
.vol input { width: 90px; text-align: right; padding-right: 5px; }
.price { grid-row: 2; background: linear-gradient(var(--mid), var(--lo)); display: flex; align-items: flex-end; justify-content: flex-end; padding: 0 14px 4px 0; }
.price small { font-size: 18px; font-weight: 600; line-height: 22px; margin-right: 8px; }
.price big { font-size: 45px; line-height: 44px; }
.price sup { font-size: 18px; font-weight: 600; align-self: flex-start; line-height: 22px; margin-left: 5px; }

.mdi-tabs { flex: none; height: 31px; display: flex; justify-content: space-between; margin-top: 2px; }
.mdi-tabs .tabs { flex: 1; font-size: 17px; }
.mdi-tabs .on { margin-left: 8px; padding: 2px 16px 0; }
.arrows { display: flex; gap: 22px; align-items: center; padding: 0 12px; border-top: 2px solid #222; }
.arrows svg { width: 6px; height: 10px; fill: #999; }

/* terminal */
.terminal { flex: none; height: 208px; display: flex; border-bottom: 2px solid #b0b0b0; padding: 5px 6px 4px 0; }
.strip { width: 25px; display: flex; flex-direction: column; align-items: center; }
.strip button { height: 22px; }
.strip span { flex: 1; width: 21px; writing-mode: vertical-rl; transform: rotate(180deg); background: linear-gradient(#b4c8d8, #dbe6f0); line-height: 21px; font-size: 16px; }
.term-body { flex: 1; display: flex; flex-direction: column; background: #fff; border: solid #999; border-width: 2px 0 0 2px; }
.term-body table { width: 100%; table-layout: fixed; margin-bottom: auto; border-collapse: separate; border-spacing: 0; }
.c-order { width: 214px; }
.c-swap { width: 130px; }
.c-profit { width: 260px; }
.term-body th { height: 31px; border-bottom: 3px solid #ccc; border-right: 1px solid #ddd; text-align: right; padding: 0 9px; background: #fbfcfc; }
.term-body td { height: 30px; text-align: right; padding: 0 5px; border-right: 1px solid #ccc; line-height: 24px; }
.term-body th.l { text-align: left; }
.term-body td.l { text-align: left; padding-left: 3px; }
.term-body td svg { width: 22px; height: 22px; display: inline-block; vertical-align: -5px; margin-right: 8px; }
.term-body .time { text-align: left; padding-left: 142px; }
.term-body em { color: #999; }
.term-body td i { display: inline-block; width: 24px; margin-left: 10px; color: #999; font-size: 15px; font-weight: 700; text-align: center; }
.term-body .total td { background: #c8c8c8; font-weight: 700; font-size: 18px; border: 0; }
.term-body .tabs { background: #f0f0f0; height: 33px; }
.term-body .tabs button { padding: 0 13px; }
.term-body .tabs .on { margin-left: 0; padding: 2px 14px 0; }
.tabs sub { color: #e03030; font-size: 15px; line-height: 0; margin-left: 2px; }

.status { flex: none; height: 37px; display: flex; line-height: 34px; padding: 4px 4px 1px; }
.status span { border-right: 2px solid #bbb; padding-left: 8px; }
.status .help { flex: 1; padding-left: 0; }
.s-def { width: 180px; }
.s-a { width: 157px; }
.s-b { width: 108px; }
.status .net { display: flex; align-items: center; gap: 6px; width: 191px; border: 0; padding-left: 3px; }
.net svg { width: 37px; height: 21px; }

.taskbar { flex: none; height: 47px; display: flex; background: #80c9e7; border-top: 2px solid #55727f; border-bottom: 2px solid #33576a; font-size: 18px; }
.ico { width: 58px; display: grid; place-items: center; }
.ico + .ico { width: 78px; }
.task { width: 247px; margin-right: 2px; display: flex; align-items: center; gap: 7px; padding-left: 14px; background: #8dd0ea; border: solid #5593ad; border-width: 0 2px 0 1px; white-space: nowrap; }
.task.on { background: #b0def0; }
.task.far { justify-content: space-between; padding-right: 27px; }
.tray { margin-left: auto; display: flex; align-items: center; gap: 13px; padding-right: 28px; }
.tray time { margin-left: 52px; }

/* floating file explorer */
.explorer { position: absolute; left: 474px; right: 363px; top: 266px; bottom: 201px; display: flex; flex-direction: column; background: #80c9e7; border: 1px solid #3c6172; border-bottom-width: 2px; border-right-width: 2px; padding: 0 10px 9px 11px; }
.ex-title { flex: none; height: 45px; display: flex; align-items: center; margin-right: -3px; }
.ex-title h2 { flex: 1; text-align: center; font-size: 22px; padding-right: 10px; }
.quick { display: flex; align-items: center; gap: 8px; }
.quick i { width: 2px; height: 20px; background: #6fa3b8; margin: 0 5px; }
.quick .caret { width: 12px; height: 12px; margin-left: 4px; }
.ex-title .winbtns { border-color: #3f4f5c; }
.ex-body { flex: 1; min-height: 0; display: flex; flex-direction: column; background: #fff; border-top: 1px solid #6fa8bf; }
.ribbon { flex: none; height: 37px; display: flex; align-items: center; border-bottom: 2px solid #e4e4e4; color: #444; }
.ribbon button { height: 36px; padding: 2px 21px 0; }
.ribbon .file { background: #3a78c6; color: #fff; width: 87px; }
.chev { width: 15px; height: 15px; }
.ribbon .chev { margin-left: auto; }
.ribbon .q { width: 22px; height: 22px; border-radius: 50%; padding: 0; margin: 0 6px 0 16px; background: #3a78c6; color: #fff; line-height: 22px; font-weight: 600; }
.address { flex: none; height: 56px; display: flex; align-items: center; padding: 0 17px 0 15px; }
.round svg { width: 29px; height: 29px; }
.round { margin-right: 18px; }
.s12 { width: 12px; height: 12px; margin-left: -2px; }
.go-up { margin: 0 10px 0 18px; }
.go-up svg { width: 20px; height: 24px; }
.path { flex: 1; height: 37px; display: flex; align-items: center; border: 2px solid #888; padding: 0 7px 0 5px; white-space: nowrap; }
.dim { color: #777; margin: 0 12px 0 9px; font-size: 20px; }
.tri { width: 8px; height: 11px; margin: 0 12px 0 15px; }
.path .end { margin-left: auto; }
.reload { width: 20px; height: 20px; margin-left: 18px; }
.search { width: 315px; height: 36px; margin-left: 16px; display: flex; align-items: center; border: 2px solid #999; padding: 0 12px 0 13px; }
.search input { flex: 1; min-width: 0; outline: 0; }
.search input::placeholder { color: #777; opacity: 1; }
.search svg { width: 19px; height: 19px; }
.ex-main { flex: 1; min-height: 0; display: flex; }
.places { flex: none; width: 246px; height: 100%; border-right: 1px solid #eee; padding: 15px 3px 135px 2px; display: grid; grid-template-rows: repeat(17, 1fr); }
.places a { display: flex; align-items: center; gap: 9px; padding-left: 43px; white-space: nowrap; border: 1px solid transparent; }
.places .root { padding-left: 28px; }
.places .cur { background: #f1f1f1; border: 2px solid #dcdcdc; padding-left: 42px; }
.files { flex: 1; min-width: 0; padding-left: 2px; }
.cols { display: flex; width: 914px; height: 39px; margin-top: 1px; border: 2px solid #e6e8e8; border-left: 0; background: #fcfdfd; color: #4b5d78; line-height: 35px; }
.cols span { border-left: 2px solid #e6e8e8; padding-left: 8px; position: relative; }
.cols .n { width: 419px; border: 0; padding-left: 26px; }
.cols .n svg { position: absolute; left: 212px; top: 0; width: 12px; height: 7px; }
.cols .d { width: 186px; }
.cols .t { width: 185px; }
.files table { width: 888px; height: 325px; margin: 9px 0 0 21px; table-layout: fixed; color: #6d6d6d; border-collapse: separate; border-spacing: 0; }
.f-name { width: 408px; }
.f-date { width: 186px; }
.files td { padding: 0; border: solid transparent; border-width: 1px 0; line-height: 24px; }
.files td svg { display: inline-block; vertical-align: -6px; margin-right: 6px; }
.files td:first-child { color: #111; padding-left: 5px; border-left-width: 1px; }
.files td:last-child { border-right-width: 1px; }
.files .hot td { background: #f6fafe; border-color: #bcdcf4; }
.ex-count { flex: none; height: 37px; display: flex; align-items: center; padding: 0 5px 0 22px; color: #3f4f6b; }
.ex-count span { margin-right: auto; padding-right: 16px; border-right: 1px solid #e6e6e6; line-height: 18px; }
.view { width: 34px; height: 36px; display: grid; place-items: center; }
.view.on { background: #cde6f7; border: 2px solid #5585a5; }
.view svg { width: 22px; height: 22px; }
.ex-status { flex: none; height: 36px; display: flex; border: 2px solid #aaa; line-height: 36px; }
.ex-status span { padding-left: 2px; }
.ex-status .g { flex: 1; }
.ex-status .m { width: 137px; border: solid #ddd; border-width: 0 2px; }
.ex-status .c { width: 232px; padding-left: 6px; display: flex; align-items: center; gap: 8px; }
.ex-status .size { width: 14px; height: 14px; margin-left: auto; align-self: flex-end; }
```
FILE: charts.js
```js
// Draws the four price charts. Series are [x, high, low, open/close...] in chart units; k is units per pixel.
const GREEN = '#5be33b', GRID = '#6f7f8e', RED = '#cf2a1e';
const charts = {
  eurusd: {
    k: 1, x: -307, y: -203, bottom: 360, h: 391, rows: [49, 100, 151, 202, 253, 304, 355],
    title: 'EURUSD,H4  1.10590 1.10644 1.10557 1.10630', price: 242.7, tag: '1.10630',
    labels: [['1.10550', 252]],
    dates: [['30 Mar 2023', 312], ['31 Mar 16:00', 411]],
    candles: [[316, 449, 513, 456, 496, 0], [326, 413, 473, 415, 455, 0], [338.5, 396, 433, 415, 422, 1], [351, 418, 436, 420, 422, 1], [363, 407, 425, 409, 422, 0], [376, 398, 427, 409, 423, 1], [388, 415, 457, 423, 440, 1], [400.5, 430, 468, 440, 442, 1], [413, 425, 474, 441, 462, 1], [425, 460, 499, 461, 491, 1], [437.5, 491, 541, 495, 525, 1], [450, 520, 554, 525, 548, 1], [462.5, 483, 555, 491, 548, 0], [475, 455, 500, 466, 491, 0],
      [1068, 252, 275, 258, 270, 0], [1081, 237, 270, 249, 258, 0], [1093, 245, 268, 249, 261, 1], [1106, 245, 268, 251, 263, 0], [1118, 228, 254, 236, 252, 0], [1130, 228, 253, 236, 247, 1], [1142, 240, 252, 244, 248, 0]],
    ma: '313,495 330,484 345,477 363,470 380,463 400,457 412,455 440,456 450,460 463,460 476,456'
  },
  gbpusd: {
    k: 3, x: 529, y: -23, bottom: 360, h: 391, rows: [49, 100, 151, 202, 253, 304, 355],
    title: 'GBPUSD,H4  1.25035 1.25143 1.25017 1.25100', price: 206, tag: '1.25100',
    labels: [['1.24220', 369], ['1.23395', 521], ['1.22545', 674], ['1.21720', 828], ['1.20870', 980], ['1.20045', 1133]],
    dates: [['5 Apr 16:00', 208], ['10 Apr 08:00', 510], ['13 Apr 00:00', 806]],
    bars: [[86, 185, 255, 215], [104, 177, 245, 240], [122, 215, 245, 225], [140, 205, 255, 250], [160, 212, 255, 250], [179, 200, 255, 250], [197, 235, 310, 242], [216, 215, 350, 315], [234, 285, 322, 292], [252, 285, 322, 320], [270, 318, 342, 327], [290, 250, 332, 285], [309, 260, 357, 354], [327, 283, 388, 292], [346, 290, 342, 338], [365, 325, 350, 342], [383, 318, 342, 320], [402, 305, 355, 335], [420, 325, 430, 378], [438, 357, 412, 378], [457, 352, 388, 380], [476, 345, 385, 376], [495, 370, 402, 400], [513, 345, 415, 355], [531, 330, 502, 498], [550, 450, 513, 452], [568, 435, 462, 450], [587, 398, 453, 412], [605, 385, 433, 400], [624, 325, 402, 345], [642, 307, 378, 350], [661, 335, 398, 395], [680, 350, 393, 360], [698, 348, 370, 355], [717, 335, 362, 342], [736, 325, 388, 380], [754, 278, 410, 322], [772, 252, 340, 256], [791, 233, 267, 257], [810, 232, 267, 238], [828, 233, 255, 248], [846, 186, 267, 188], [865, 158, 222, 170], [884, 158, 225, 172], [902, 158, 190, 182], [920, 170, 200, 188], [939, 140, 188, 150], [957, 148, 225, 220], [976, 200, 222, 206]],
    ma: '195,328 215,308 240,295 290,280 335,280 370,293 410,305 450,325 490,345 515,348 550,370 600,390 650,395 710,393 750,386 780,372 820,338 870,297 920,262 976,225'
  },
  usdchf: {
    k: 3, x: -307, y: -40, bottom: 239, sub: [243, 358], h: 390, rows: [30, 81, 132, 183, 234],
    title: 'USDCHF,H4  0.8882', price: 791, labels: [],
    dates: [['14 Mar 2023', 937], ['17 Mar 08:00', 1234]],
    candles: [[942, 405, 488, 410, 412, 1]],
    ticks: [[1072, 178, 206], [1080, 178, 190], [1088, 190, 206], [1106, 196, 206], [1165, 196, 206], [1183, 196, 206]],
    hist: [[941, 1163], [960, 1150], [978, 1135], [997, 1127], [1016, 1108], [1034, 1077], [1053, 1030], [1072, 975], [1110, 912], [1128, 905], [1146, 900], [1165, 895], [1184, 893], [1202, 893], [1220, 890], [1240, 890], [1276, 890], [1295, 890], [1313, 890], [1332, 890], [1350, 890], [1369, 890], [1388, 890], [1406, 890]],
    signal: '941,1177 980,1177 1030,1152 1060,1125 1100,1065 1150,990 1200,930 1230,900 1270,882 1420,882',
    order: ['#29345739 sell 1.00', 970, 666], note: ['MACD(12,26,9) -0.0048', 960, 890]
  },
  usdjpy: {
    k: 3, x: 509, y: -60, bottom: 239, sub: [243, 358], h: 390, rows: [30, 81, 132, 183, 234],
    title: '', price: 536, tag: '132.428',
    labels: [['133.830', 272], ['133.010', 426], ['132.210', 580], ['131.390', 731], ['130.570', 884], ['246.0137', 941, -3], ['100', 1020, -3], ['0.00', 1088, -3], ['-100', 1158, -5], ['-231.411', 1224, -3]],
    dates: [['11 Apr 08:00', 272], ['12 Apr 16:00', 568], ['14 Apr 00:00', 865]],
    candles: [[275, 322, 430, 353, 412, 1], [313, 362, 437, 410, 413, 1], [349, 290, 412, 293, 412, 0], [387, 277, 315, 296, 299, 1], [424, 285, 328, 300, 303, 1], [461, 233, 320, 285, 300, 0], [498, 247, 325, 275, 287, 0], [535, 256, 483, 273, 423, 1], [572, 360, 470, 392, 422, 0], [610, 352, 422, 394, 397, 1], [647, 377, 441, 397, 408, 0], [684, 367, 422, 376, 399, 0], [721, 360, 452, 376, 398, 1], [758, 352, 523, 397, 523, 1], [795, 515, 617, 520, 547, 1], [832, 465, 547, 508, 547, 0], [869, 492, 537, 508, 511, 1], [906, 495, 567, 502, 528, 1], [943, 502, 585, 524, 527, 1], [980, 510, 542, 520, 538, 1]],
    levels: [1019, 1157], grid: [1087],
    line: '255,1030 280,1047 312,1060 350,1033 387,1022 424,1032 461,1023 497,1030 535,1108 572,1157 610,1148 647,1154 684,1130 721,1135 758,1187 795,1237 832,1182 869,1167 906,1167 943,1158 978,1142'
  }
};

function draw(c) {
  const X = v => v / c.k + c.x, Y = v => v / c.k + c.y, end = c.sub ? c.sub[1] : c.bottom;
  const pts = s => s.split(' ').map(p => { const [a, b] = p.split(','); return X(+a) + ',' + Y(+b); }).join(' ');
  const path = (d, stroke, w = 2, extra = '') => `<path d="${d}" fill="none" stroke="${stroke}" stroke-width="${w}" ${extra}/>`;
  let s = '', d = '';
  for (let x = 56; x < 873; x += 49.5) d += `M${x} 6V${c.bottom}` + (c.sub ? `M${x} ${c.sub[0]}V${end}` : '');
  for (const y of c.rows) d += `M6 ${y}H873`;
  for (const y of c.grid || []) d += `M6 ${Y(y)}H873`;
  s += path(d, GRID, 1.6, 'stroke-dasharray="5 5"');
  for (const y of c.levels || []) s += path(`M6 ${Y(y)}H873`, '#c0c0c0', 1.6, 'stroke-dasharray="5 5"');
  s += path(`M6 ${Y(c.price)}H873`, '#78899a', 1.6);
  if (c.order) {
    s += path(`M6 ${Y(c.order[2])}H873`, GREEN, 1.6, 'stroke-dasharray="13 8 3 8"');
    s += `<text x="${X(c.order[1])}" y="${Y(c.order[2]) - 4}">${c.order[0]}</text>`;
  }
  for (const [x, b] of c.hist || []) s += path(`M${X(x)} ${Y(930)}V${Y(b)}`, '#b8b8b8', 1.6);
  if (c.signal) s += `<polyline points="${pts(c.signal)}" fill="none" stroke="${RED}" stroke-width="2" stroke-dasharray="6 4"/>`;
  for (const [x, a, b] of c.ticks || []) s += path(`M${X(x)} ${Y(a)}V${Y(b)}`, GREEN);
  for (const [x, hi, lo, a, b, full] of c.candles || []) {
    s += path(`M${X(x)} ${Y(hi)}V${Y(lo)}`, GREEN);
    s += `<rect x="${X(x) - 3}" y="${Y(a)}" width="6" height="${Math.max(1, Y(b) - Y(a))}" fill="${full ? '#fff' : '#000'}" stroke="${GREEN}" stroke-width="1.6"/>`;
  }
  let prev = 200;
  for (const [x, hi, lo, close] of c.bars || []) {
    const open = Math.min(lo, Math.max(hi, prev));
    s += path(`M${X(x)} ${Y(hi)}V${Y(lo)}M${X(x) - 3} ${Y(open)}H${X(x)}M${X(x)} ${Y(close)}h3`, GREEN, 1.8);
    prev = close;
  }
  if (c.ma) s += `<polyline points="${pts(c.ma)}" fill="none" stroke="${RED}" stroke-width="1.8"/>`;
  if (c.line) s += `<polyline points="${pts(c.line)}" fill="none" stroke="#4f8ba0" stroke-width="1.6"/>`;
  s += path(`M5.500 ${c.bottom}V5.500H873V${c.bottom}Z` + (c.sub ? `M5.500 ${c.sub[0]}H873V${end}H5.500Z` : ''), '#e8e8e8', 1.6);
  for (const [t, y, dx = 0] of c.labels) s += path(`M873 ${Y(y)}h4`, '#e8e8e8') + `<text x="${882 + dx}" y="${Y(y) + 5}">${t}</text>`;
  if (c.tag) s += `<rect x="876" y="${Y(c.price) - 8}" width="61" height="17" fill="#fff"/><text class="tag" x="882" y="${Y(c.price) + 5}">${c.tag}</text>`;
  for (const [t, x] of c.dates) s += path(`M${X(x) + 1} ${end}v6`, '#e8e8e8') + `<text x="${X(x)}" y="${end + 19}">${t}</text>`;
  if (c.note) s += `<text x="${X(c.note[1])}" y="${Y(c.note[2]) + 5}">${c.note[0]}</text>`;
  if (c.title) s += `<path d="M10 21l6-6 6 6z" fill="#fff"/><text x="30" y="23">${c.title}</text>`;
  return `<svg viewBox="0 0 936 ${c.h}" preserveAspectRatio="xMinYMin meet">${s}</svg>`;
}

for (const el of document.querySelectorAll('.plot')) el.insertAdjacentHTML('afterbegin', draw(charts[el.dataset.chart]));

const glyphs = { Minimize: '<path d="M1 9h13v4H1z"/>', Maximize: '<path d="M3 4h10v8H3z" fill="none" stroke="#000" stroke-width="3"/>', Close: '<path d="M3 2l10 11M13 2L3 13" stroke="#000" stroke-width="3"/>' };
for (const el of document.querySelectorAll('.mini'))
  el.innerHTML = Object.entries(glyphs).map(([n, g]) => `<button aria-label="${n}"><svg viewBox="0 0 16 16">${g}</svg></button>`).join('');
```
